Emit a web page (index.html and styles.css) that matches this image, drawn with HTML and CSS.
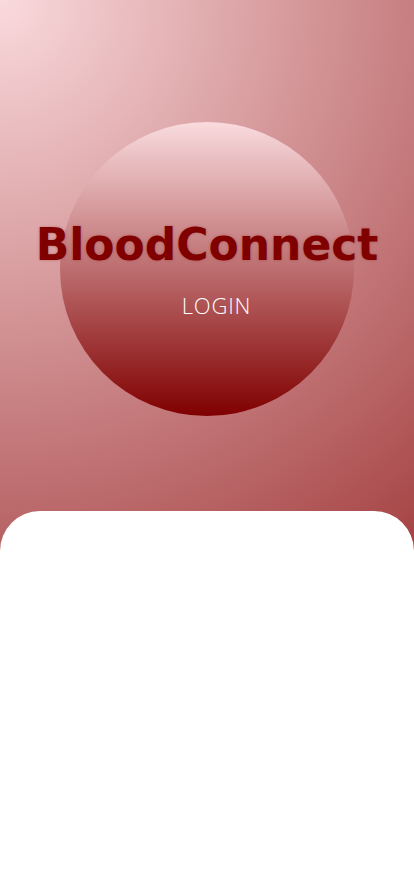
FILE: index.html
```html
<!DOCTYPE html>
<html lang="en">
<head>
<meta charset="utf-8">
<meta name="viewport" content="width=device-width, initial-scale=1">
<title>BloodConnect</title>
<link rel="stylesheet" href="styles.css">
</head>
<body>
<div class="page">
  <header class="hero">
    <div class="orb">
      <h1 class="brand">BloodConnect</h1>
      <p class="subtitle">LOGIN</p>
    </div>
  </header>
  <main class="card"></main>
</div>
</body>
</html>
```

FILE: styles.css
```css
* { box-sizing: border-box; }
html, body { margin: 0; padding: 0; }
body { font-family: "DejaVu Sans", "Open Sans", sans-serif; }
.page {
  min-height: 896px;
  display: flex;
  flex-direction: column;
  background: radial-gradient(circle farthest-corner at top left, #fadadd 0%, #800000 100%);
}
.hero {
  height: 511px;
  display: flex;
  justify-content: center;
  padding-top: 122px;
}
.orb {
  width: 294px;
  height: 294px;
  border-radius: 50%;
  background: linear-gradient(to bottom, #f9dbde 0%, #800000 100%);
  display: flex;
  flex-direction: column;
  align-items: center;
  padding-top: 97px;
}
.brand {
  margin: 0;
  font-family: "DejaVu Sans", sans-serif;
  font-weight: 700;
  font-size: 44px;
  line-height: 52px;
  color: #800000;
  white-space: nowrap;
  letter-spacing: 0;
  text-shadow: 0 0 3px rgba(128, 0, 0, 0.3);
}
.subtitle {
  margin: 20px 0 0 19px;
  font-family: "Open Sans", sans-serif;
  font-weight: 300;
  font-size: 22px;
  line-height: 28px;
  color: #ffffff;
  letter-spacing: 0.8px;
}
.card {
  flex: 1;
  background: #ffffff;
  border-radius: 40px 40px 0 0;
}
```
